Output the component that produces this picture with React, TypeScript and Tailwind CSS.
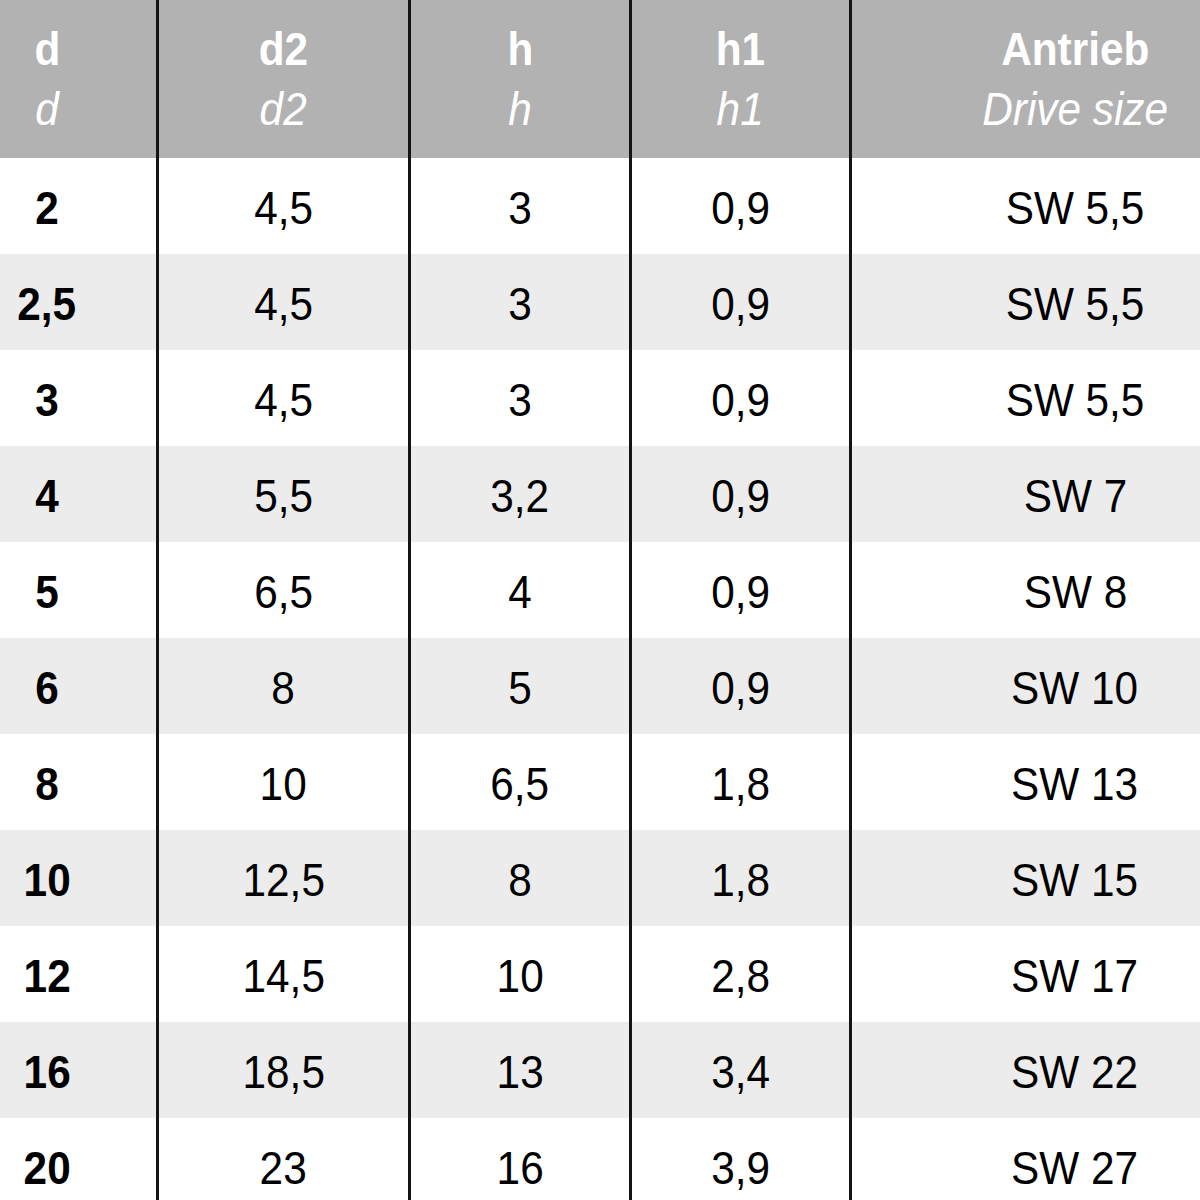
import React from 'react';

// Dimension table: d / d2 / h / h1 / drive size
const rows = [
  { d: '2', d2: '4,5', h: '3', h1: '0,9', sw: 'SW 5,5' },
  { d: '2,5', d2: '4,5', h: '3', h1: '0,9', sw: 'SW 5,5' },
  { d: '3', d2: '4,5', h: '3', h1: '0,9', sw: 'SW 5,5' },
  { d: '4', d2: '5,5', h: '3,2', h1: '0,9', sw: 'SW 7' },
  { d: '5', d2: '6,5', h: '4', h1: '0,9', sw: 'SW 8' },
  { d: '6', d2: '8', h: '5', h1: '0,9', sw: 'SW 10' },
  { d: '8', d2: '10', h: '6,5', h1: '1,8', sw: 'SW 13' },
  { d: '10', d2: '12,5', h: '8', h1: '1,8', sw: 'SW 15' },
  { d: '12', d2: '14,5', h: '10', h1: '2,8', sw: 'SW 17' },
  { d: '16', d2: '18,5', h: '13', h1: '3,4', sw: 'SW 22' },
  { d: '20', d2: '23', h: '16', h1: '3,9', sw: 'SW 27' },
];

const Narrow = ({ children, className = '' }: { children: React.ReactNode; className?: string }) => (
  <span className={`inline-block scale-x-[0.9] whitespace-nowrap ${className}`}>{children}</span>
);

const HeadCell = ({ top, sub }: { top: string; sub: string }) => (
  <div className="flex flex-col items-center text-white leading-[60px]">
    <Narrow className="font-bold">{top}</Narrow>
    <Narrow className="italic">{sub}</Narrow>
  </div>
);

const App = () => {
  return (
    <div
      className="w-[1200px] h-[1200px] overflow-hidden bg-white text-[47px] text-black"
      style={{ fontFamily: '"Liberation Sans", Arial, sans-serif' }}
    >
      {/* Header */}
      <div className="flex h-[158px] bg-[#b2b2b2]">
        <div className="w-[159px] shrink-0 border-r-[3px] border-[#141414] flex items-center justify-center pr-[62px]">
          <HeadCell top="d" sub="d" />
        </div>
        <div className="w-[252px] shrink-0 border-r-[3px] border-[#141414] flex items-center justify-center">
          <HeadCell top="d2" sub="d2" />
        </div>
        <div className="w-[221px] shrink-0 border-r-[3px] border-[#141414] flex items-center justify-center">
          <HeadCell top="h" sub="h" />
        </div>
        <div className="w-[220px] shrink-0 border-r-[3px] border-[#141414] flex items-center justify-center">
          <HeadCell top="h1" sub="h1" />
        </div>
        <div className="flex-1 overflow-hidden flex items-center">
          <div className="w-[446px] shrink-0 flex justify-center">
            <HeadCell top="Antrieb" sub="Drive size" />
          </div>
        </div>
      </div>

      {/* Body */}
      {rows.map((r, i) => (
        <div key={i} className={`flex h-[96px] leading-none ${i % 2 === 1 ? 'bg-[#ececec]' : 'bg-white'}`}>
          <div className="w-[159px] shrink-0 border-r-[3px] border-[#141414] flex items-center justify-center pr-[62px] pt-[3px] font-bold">
            <Narrow>{r.d}</Narrow>
          </div>
          <div className="w-[252px] shrink-0 border-r-[3px] border-[#141414] flex items-center justify-center pt-[3px]">
            <Narrow>{r.d2}</Narrow>
          </div>
          <div className="w-[221px] shrink-0 border-r-[3px] border-[#141414] flex items-center justify-center pt-[3px]">
            <Narrow>{r.h}</Narrow>
          </div>
          <div className="w-[220px] shrink-0 border-r-[3px] border-[#141414] flex items-center justify-center pt-[3px]">
            <Narrow>{r.h1}</Narrow>
          </div>
          <div className="flex-1 overflow-hidden flex items-center pt-[3px]">
            <div className="w-[446px] shrink-0 flex justify-center">
              <Narrow>{r.sw}</Narrow>
            </div>
          </div>
        </div>
      ))}
    </div>
  );
};

export default App;
